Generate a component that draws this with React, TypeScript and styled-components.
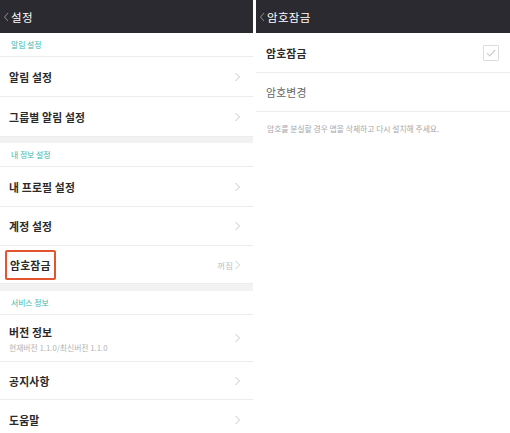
import React from "react";
import styled, { createGlobalStyle } from "styled-components";

const GlobalStyle = createGlobalStyle`
  html, body {
    margin: 0;
    padding: 0;
    background: #ffffff;
  }
  body {
    font-family: "Noto Sans CJK KR", "Noto Sans", sans-serif;
    -webkit-font-smoothing: antialiased;
  }
`;

const Screen = styled.div`
  display: flex;
  gap: 3px;
  width: 510px;
  height: 433px;
  overflow: hidden;
  background: #ffffff;
`;

const Panel = styled.div<{ $w: number }>`
  width: ${(p) => p.$w}px;
  flex: none;
  display: flex;
  flex-direction: column;
  overflow: hidden;
  background: #ffffff;
`;

const Header = styled.div`
  height: 33px;
  flex: none;
  background: #2a2a30;
  display: flex;
  align-items: center;
  gap: 2px;
  padding-left: 3px;
  color: #ffffff;
  font-size: 11.5px;
  letter-spacing: 0.3px;
`;

const SectionLabel = styled.div`
  height: 24px;
  flex: none;
  box-sizing: border-box;
  border-bottom: 1px solid #ececec;
  display: flex;
  align-items: center;
  padding-left: 11px;
  font-size: 7.8px;
  color: #35b8ac;
  font-weight: 400;
`;

const Spacer = styled.div<{ $h: number }>`
  height: ${(p) => p.$h}px;
  flex: none;
  background: #f2f2f2;
`;

const Row = styled.div<{ $h?: number; $pl?: number }>`
  height: ${(p) => p.$h ?? 40}px;
  box-sizing: border-box;
  flex: none;
  border-bottom: 1px solid #ececec;
  display: flex;
  align-items: center;
  justify-content: space-between;
  padding: 0 12px 0 ${(p) => p.$pl ?? 9}px;
`;

const TitleBlock = styled.div`
  display: flex;
  flex-direction: column;
  gap: 2px;
`;

const Title = styled.span<{ $muted?: boolean }>`
  font-size: 10.8px;
  font-weight: ${(p) => (p.$muted ? 400 : 700)};
  color: ${(p) => (p.$muted ? "#666666" : "#2a2a2a")};
  letter-spacing: 0.2px;
`;

const Highlight = styled.span`
  margin-left: -4px;
  padding: 5px 3px;
  border: 2px solid #e2552e;
  border-radius: 2px;
`;

const Sub = styled.span`
  font-size: 7.8px;
  color: #b4b4b4;
`;

const Trail = styled.div`
  display: flex;
  align-items: center;
  gap: 1px;
`;

const Value = styled.span`
  font-size: 8.5px;
  color: #bdbdbd;
`;

const CheckBox = styled.div`
  width: 16px;
  height: 16px;
  box-sizing: border-box;
  border: 1px solid #dcdcdc;
  border-radius: 1px;
  display: flex;
  align-items: center;
  justify-content: center;
  margin-right: -1px;
`;

const Note = styled.div`
  padding: 11px 0 0 11px;
  font-size: 7.8px;
  color: #a8a8a8;
`;

const Back = () => (
  <svg width="6" height="10" viewBox="0 0 6 10">
    <path d="M5 1 L1.5 5 L5 9" fill="none" stroke="#8a8a90" strokeWidth="1" />
  </svg>
);

const Chevron = () => (
  <svg width="7" height="10" viewBox="0 0 7 10">
    <path d="M1.5 1 L5.5 5 L1.5 9" fill="none" stroke="#c9c9c9" strokeWidth="1" />
  </svg>
);

const Check = () => (
  <svg width="12" height="12" viewBox="0 0 12 12">
    <path d="M2 6.2 L4.8 9 L10.2 3" fill="none" stroke="#cfcfcf" strokeWidth="1.2" />
  </svg>
);

export default function App() {
  return (
    <>
      <GlobalStyle />
      <Screen>
        <Panel $w={253}>
          <Header>
            <Back />
            <span>설정</span>
          </Header>
          <SectionLabel>알림 설정</SectionLabel>
          <Row>
            <Title>알림 설정</Title>
            <Chevron />
          </Row>
          <Row>
            <Title>그룹별 알림 설정</Title>
            <Chevron />
          </Row>
          <Spacer $h={6} />
          <SectionLabel>내 정보 설정</SectionLabel>
          <Row $h={40}>
            <Title>내 프로필 설정</Title>
            <Chevron />
          </Row>
          <Row $h={39}>
            <Title>계정 설정</Title>
            <Chevron />
          </Row>
          <Row $h={38}>
            <Title>
              <Highlight>암호잠금</Highlight>
            </Title>
            <Trail>
              <Value>꺼짐</Value>
              <Chevron />
            </Trail>
          </Row>
          <Spacer $h={7} />
          <SectionLabel>서비스 정보</SectionLabel>
          <Row $h={47}>
            <TitleBlock>
              <Title>버전 정보</Title>
              <Sub>현재버전 1.1.0/최신버전 1.1.0</Sub>
            </TitleBlock>
            <Chevron />
          </Row>
          <Row $h={38}>
            <Title>공지사항</Title>
            <Chevron />
          </Row>
          <Row $h={40}>
            <Title>도움말</Title>
            <Chevron />
          </Row>
        </Panel>
        <Panel $w={254}>
          <Header>
            <Back />
            <span>암호잠금</span>
          </Header>
          <Row $h={40} $pl={10}>
            <Title>암호잠금</Title>
            <CheckBox>
              <Check />
            </CheckBox>
          </Row>
          <Row $h={39} $pl={10}>
            <Title $muted>암호변경</Title>
          </Row>
          <Note>암호를 분실할 경우 앱을 삭제하고 다시 설치해 주세요.</Note>
        </Panel>
      </Screen>
    </>
  );
}
